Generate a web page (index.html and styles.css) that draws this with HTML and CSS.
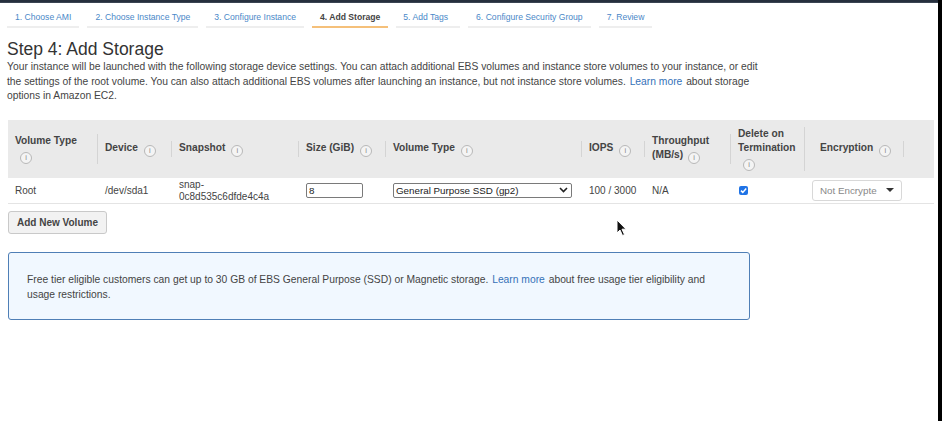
FILE: index.html
```html
<!DOCTYPE html>
<html lang="en">
<head>
<meta charset="utf-8">
<title>Step 4: Add Storage</title>
<link rel="stylesheet" href="styles.css">
</head>
<body>
<div class="frame">
  <div class="main">
    <div class="topbar"></div>
    <ul class="tabs">
      <li class="tab">1. Choose AMI</li>
      <li class="tab">2. Choose Instance Type</li>
      <li class="tab">3. Configure Instance</li>
      <li class="tab active">4. Add Storage</li>
      <li class="tab tab-wide">5. Add Tags</li>
      <li class="tab">6. Configure Security Group</li>
      <li class="tab">7. Review</li>
    </ul>
    <div class="content">
      <h1 class="title">Step 4: Add Storage</h1>
      <p class="intro">Your instance will be launched with the following storage device settings. You can attach additional EBS volumes and instance store volumes to your instance, or edit<br>the settings of the root volume. You can also attach additional EBS volumes after launching an instance, but not instance store volumes. <a class="link">Learn more</a> about storage<br>options in Amazon EC2.</p>

      <div class="grid">
        <div class="th"><div class="hc">Volume Type<br><span class="i">i</span></div></div>
        <div class="th"><div class="hc">Device<span class="i">i</span></div></div>
        <div class="th"><div class="hc">Snapshot<span class="i">i</span></div></div>
        <div class="th"><div class="hc">Size (GiB)<span class="i">i</span></div></div>
        <div class="th"><div class="hc">Volume Type<span class="i">i</span></div></div>
        <div class="th"><div class="hc">IOPS<span class="i">i</span></div></div>
        <div class="th"><div class="hc">Throughput<br>(MB/s)<span class="i">i</span></div></div>
        <div class="th"><div class="hc">Delete on<br>Termination<br><span class="i">i</span></div></div>
        <div class="th th-last"><div class="hc hc-last">Encryption<span class="i">i</span></div></div>

        <div class="td">Root</div>
        <div class="td">/dev/sda1</div>
        <div class="td snap">snap-<br>0c8d535c6dfde4c4a</div>
        <div class="td"><div class="input">8</div></div>
        <div class="td"><div class="select"><span>General Purpose SSD (gp2)</span><svg class="chev" width="9" height="6" viewBox="0 0 9 6"><path d="M1 1 L4.5 4.5 L8 1" fill="none" stroke="#222" stroke-width="1.6"/></svg></div></div>
        <div class="td">100 / 3000</div>
        <div class="td">N/A</div>
        <div class="td"><div class="check"><svg width="9" height="9" viewBox="0 0 9 9"><path d="M2 4.6 L3.8 6.4 L7.2 2.6" fill="none" stroke="#fff" stroke-width="1.5"/></svg></div></div>
        <div class="td"><div class="enc"><span>Not Encrypte</span><span class="caret"></span></div></div>
      </div>

      <button class="btn">Add New Volume</button>

      <div class="notice">Free tier eligible customers can get up to 30 GB of EBS General Purpose (SSD) or Magnetic storage. <a class="link">Learn more</a> about free usage tier eligibility and<br>usage restrictions.</div>
    </div>
  </div>
  <div class="edge"></div>
  <svg class="cursor" width="12" height="18" viewBox="0 0 12 18"><path d="M1 1 L1 14 L4 11 L6.5 16.5 L8.5 15.6 L6 10.2 L10 10.2 Z" fill="#111" stroke="#fff" stroke-width="1"/></svg>
</div>
</body>
</html>
```
FILE: styles.css
```css
* { box-sizing: border-box; }
html, body { margin: 0; padding: 0; }
body {
  font-family: "Liberation Sans", Arial, sans-serif;
  background: #fff;
  color: #444;
}
.frame {
  position: relative;
  display: flex;
  height: 421px;
  width: 942px;
  overflow: hidden;
}
.main { flex: 1; min-width: 0; }
.edge { width: 4px; background: #000; }
.topbar { height: 3px; background: #262f3d; border-bottom: 1px solid #3a4452; }

.tabs {
  list-style: none;
  margin: 0;
  padding: 6px 0 0 7px;
  display: flex;
  gap: 8px;
}
.tab {
  padding: 0 8px;
  height: 19px;
  line-height: 17px;
  border-bottom: 2px solid #eeeeee;
  font-size: 8.6px;
  color: #4a88c8;
  white-space: nowrap;
}
.tab.active { color: #444; font-weight: bold; border-bottom-color: #f5c07a; }
.tab-wide { padding: 0 12px 0 7px; }

.content { padding: 0 0 0 8px; }
.title {
  margin: 11px 0 0 -1px;
  font-size: 17.5px;
  line-height: 20px;
  font-weight: normal;
  color: #333;
}
.intro {
  margin: 1px 0 0 -1px;
  font-size: 10.3px;
  line-height: 14.5px;
  color: #444;
  width: 800px;
}
.link { color: #3571b8; margin: 0 1px; }

.grid {
  margin-top: 16px;
  width: 926px;
  display: grid;
  grid-template-columns: 90px 74px 127px 87px 196px 63px 86px 74px 129px;
  grid-template-rows: 58px 26px;
}
.th {
  background: #eaeaea;
  display: flex;
  align-items: center;
  padding-left: 7px;
  font-weight: bold;
  font-size: 10.2px;
  line-height: 14px;
  color: #444;
}
.th-last { padding-left: 15px; }
.hc { flex: 1; border-right: 1px solid #d4d4d4; }
.hc-last { flex: none; width: 84px; }
.i {
  display: inline-block;
  width: 12px;
  height: 12px;
  border: 1px solid #b8b8b8;
  border-radius: 50%;
  font-size: 7.5px;
  line-height: 10px;
  text-align: center;
  color: #888;
  font-weight: normal;
  margin-left: 6px;
  vertical-align: -2px;
  background: #f4f4f4;
}
.hc br + .i { margin-left: 5px; }

.td {
  display: flex;
  align-items: center;
  padding-left: 7px;
  font-size: 10px;
  color: #444;
  border-bottom: 1px solid #e4e4e4;
}
.td.snap { line-height: 11.5px; padding-top: 1px; }
.input {
  width: 57px;
  height: 15px;
  border: 1px solid #7a7a7a;
  border-radius: 2px;
  padding-left: 2px;
  font-size: 9.8px;
  line-height: 13px;
  color: #222;
}
.select {
  width: 179px;
  height: 15px;
  border: 1px solid #7a7a7a;
  border-radius: 2px;
  padding: 0 3px 0 2px;
  font-size: 9.8px;
  line-height: 13px;
  color: #222;
  display: flex;
  justify-content: space-between;
  align-items: center;
}
.check {
  width: 9px;
  height: 9px;
  border-radius: 2px;
  background: #1f73e6;
  display: flex;
  margin-left: 1px;
}
.enc {
  width: 90px;
  height: 21px;
  border: 1px solid #d8d8d8;
  border-radius: 3px;
  padding: 0 7px 0 7px;
  display: flex;
  align-items: center;
  justify-content: space-between;
  font-size: 9.8px;
  color: #888;
  background: #fff;
}
.caret {
  width: 0;
  height: 0;
  border-left: 4px solid transparent;
  border-right: 4px solid transparent;
  border-top: 4px solid #333;
}

.btn {
  display: block;
  margin-top: 7px;
  width: 99px;
  height: 23px;
  border: 1px solid #c9c9c9;
  border-radius: 3px;
  background: #f2f2f2;
  font-family: "Liberation Sans", Arial, sans-serif;
  font-weight: bold;
  font-size: 10px;
  color: #444;
  padding: 0;
}

.notice {
  margin-top: 18px;
  width: 742px;
  height: 68px;
  border: 1px solid #4f7fb6;
  border-radius: 3px;
  background: #f1f8ff;
  padding: 19px 18px 0 18px;
  font-size: 10.3px;
  line-height: 15px;
  color: #444;
}

.cursor { position: absolute; left: 616px; top: 219px; }
```
